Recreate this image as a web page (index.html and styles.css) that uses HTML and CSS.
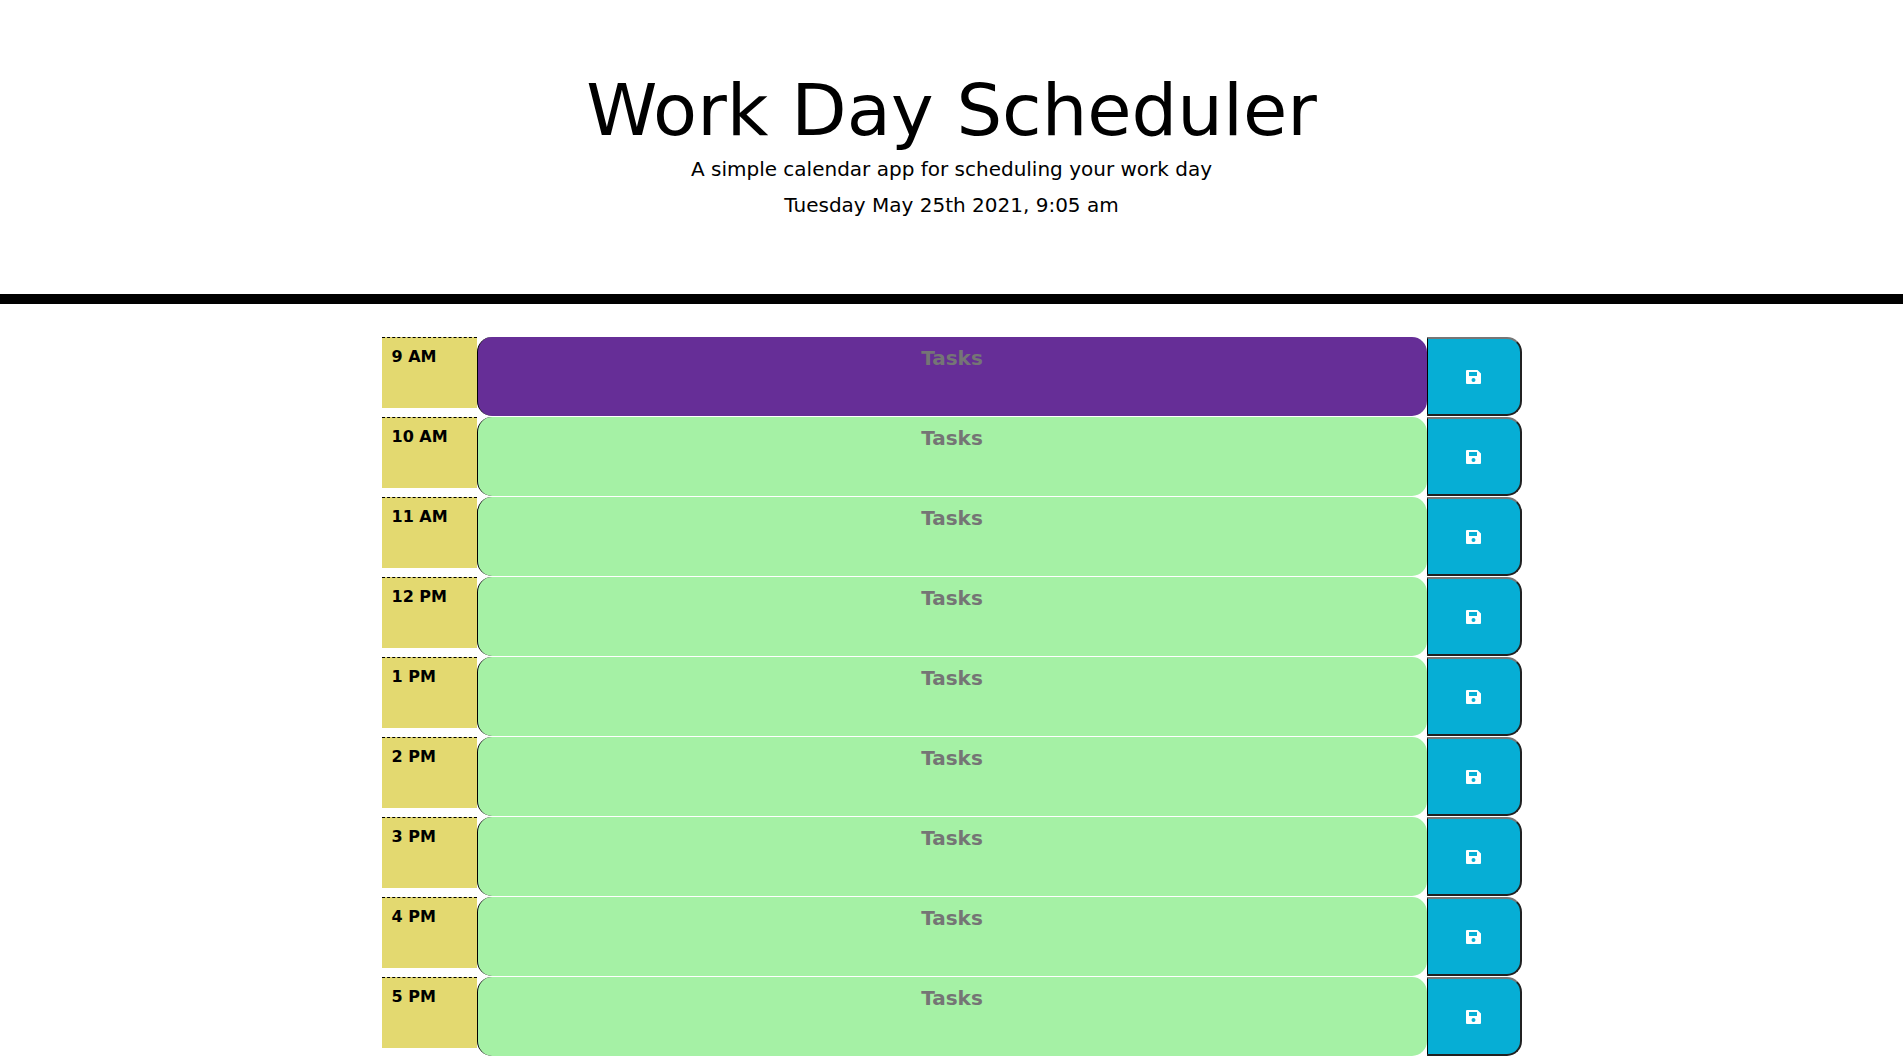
FILE: index.html
```html
<!DOCTYPE html>
<html lang="en">
<head>
<meta charset="utf-8">
<meta name="viewport" content="width=device-width, initial-scale=1">
<title>Work Day Scheduler</title>
<link rel="stylesheet" href="styles.css">
</head>
<body>
<svg class="sprite" aria-hidden="true">
  <symbol id="save" viewBox="0 0 15 14">
    <path fill-rule="evenodd" d="M1 0H11.5L15 3.500V13a1 1 0 0 1-1 1H1a1 1 0 0 1-1-1V1a1 1 0 0 1 1-1ZM3 2V6H11V2ZM7.500 8a2 2 0 1 0 0 4a2 2 0 0 0 0-4Z"/>
  </symbol>
</svg>
<header class="masthead">
  <h1 class="title">Work Day Scheduler</h1>
  <p class="lead">A simple calendar app for scheduling your work day</p>
  <p class="lead">Tuesday May 25th 2021, 9:05 am</p>
</header>
<main class="container">
  <div class="row"><label class="hour" for="t9">9 AM</label><textarea class="task present" id="t9" placeholder="Tasks"></textarea><button class="save" type="button" aria-label="Save 9 AM"><svg class="icon"><use href="#save"/></svg></button></div>
  <div class="row"><label class="hour" for="t10">10 AM</label><textarea class="task" id="t10" placeholder="Tasks"></textarea><button class="save" type="button" aria-label="Save 10 AM"><svg class="icon"><use href="#save"/></svg></button></div>
  <div class="row"><label class="hour" for="t11">11 AM</label><textarea class="task" id="t11" placeholder="Tasks"></textarea><button class="save" type="button" aria-label="Save 11 AM"><svg class="icon"><use href="#save"/></svg></button></div>
  <div class="row"><label class="hour" for="t12">12 PM</label><textarea class="task" id="t12" placeholder="Tasks"></textarea><button class="save" type="button" aria-label="Save 12 PM"><svg class="icon"><use href="#save"/></svg></button></div>
  <div class="row"><label class="hour" for="t13">1 PM</label><textarea class="task" id="t13" placeholder="Tasks"></textarea><button class="save" type="button" aria-label="Save 1 PM"><svg class="icon"><use href="#save"/></svg></button></div>
  <div class="row"><label class="hour" for="t14">2 PM</label><textarea class="task" id="t14" placeholder="Tasks"></textarea><button class="save" type="button" aria-label="Save 2 PM"><svg class="icon"><use href="#save"/></svg></button></div>
  <div class="row"><label class="hour" for="t15">3 PM</label><textarea class="task" id="t15" placeholder="Tasks"></textarea><button class="save" type="button" aria-label="Save 3 PM"><svg class="icon"><use href="#save"/></svg></button></div>
  <div class="row"><label class="hour" for="t16">4 PM</label><textarea class="task" id="t16" placeholder="Tasks"></textarea><button class="save" type="button" aria-label="Save 4 PM"><svg class="icon"><use href="#save"/></svg></button></div>
  <div class="row"><label class="hour" for="t17">5 PM</label><textarea class="task" id="t17" placeholder="Tasks"></textarea><button class="save" type="button" aria-label="Save 5 PM"><svg class="icon"><use href="#save"/></svg></button></div>
</main>
</body>
</html>
```
FILE: styles.css
```css
*, *::before, *::after { box-sizing: border-box; }

body {
  margin: 0;
  background: #fff;
  color: #000;
  font-family: Verdana, "DejaVu Sans", sans-serif;
  font-size: 16px;
  line-height: 24px;
}

.sprite { position: absolute; width: 0; height: 0; }

.masthead {
  padding: 66px 16px 68px;
  border-bottom: 10px solid #000;
  text-align: center;
}

.title {
  margin: 0;
  font-size: 72px;
  font-weight: 400;
  line-height: 88px;
}

.lead {
  margin: 0 0 6px;
  font-size: 20px;
  line-height: 30px;
}

.container {
  display: flex;
  flex-direction: column;
  gap: 1px;
  max-width: 1140px;
  margin: 33px auto 0;
}

.row {
  display: grid;
  grid-template-columns: 1fr 10fr 1fr;
  align-items: start;
}

.hour {
  height: 71px;
  padding: 7px 10px;
  border-top: 1px dashed #000;
  background: #e3d970;
  font-weight: 700;
}

.task {
  display: block;
  width: 100%;
  height: 79px;
  padding: 6px 10px;
  border: 0;
  border-left: 1px solid #000;
  border-radius: 15px;
  background: #a5f1a5;
  color: #000;
  font: 700 20px/30px Verdana, "DejaVu Sans", sans-serif;
  text-align: center;
  resize: none;
  overflow: hidden;
}

.task::placeholder { color: #757575; }

.present { background: #662e97; }

.save {
  display: flex;
  align-items: center;
  justify-content: center;
  height: 79px;
  padding: 0;
  border: 2px solid #212121;
  border-top-color: #767676;
  border-left: 1px solid #000;
  border-radius: 0 15px 15px 0;
  background: #06aed5;
  color: #fff;
}

.icon { width: 15px; height: 14px; fill: currentColor; }
```
